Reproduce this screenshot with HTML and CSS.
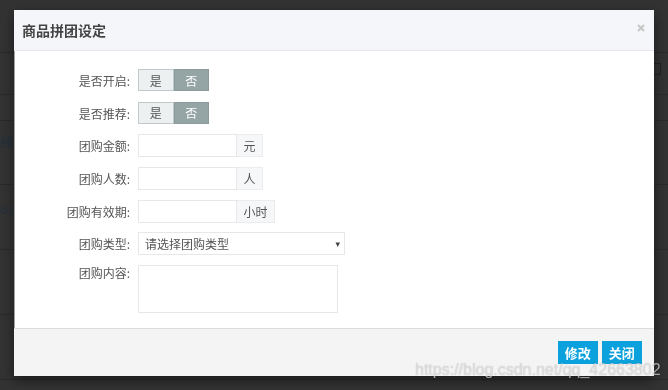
FILE: index.html
```html
<!DOCTYPE html>
<html lang="zh-CN">
<head>
    <meta charset="UTF-8">
    <meta name="viewport" content="width=device-width, initial-scale=1.0">
    <title>商品拼团设定</title>
    <link rel="stylesheet" href="styles.css">
</head>
<body>
    <!-- page behind the backdrop -->
    <div class="page">
        <div class="page-row top"></div>
        <div class="page-row h42"><span class="page-icon"></span></div>
        <div class="page-row h26"></div>
        <div class="page-row h64"><span class="page-text">纯</span></div>
        <div class="page-row h65"><span class="page-text low">os]</span></div>
        <div class="page-row h65"></div>
        <div class="page-row h65"></div>
        <div class="page-row last"></div>
    </div>

    <div class="modal">
        <div class="modal-header">
            <h4>商品拼团设定</h4>
            <span class="close">
                <svg width="8" height="8" viewBox="0 0 8 8"><path d="M1 1L7 7M7 1L1 7" stroke="#c6c6c6" stroke-width="2"/></svg>
            </span>
        </div>
        <div class="modal-body">
            <div class="form-row">
                <label>是否开启:</label>
                <div class="toggle"><span class="opt">是</span><span class="opt active">否</span></div>
            </div>
            <div class="form-row">
                <label>是否推荐:</label>
                <div class="toggle"><span class="opt">是</span><span class="opt active">否</span></div>
            </div>
            <div class="form-row">
                <label>团购金额:</label>
                <div class="input-group"><input type="text"><span class="addon">元</span></div>
            </div>
            <div class="form-row">
                <label>团购人数:</label>
                <div class="input-group"><input type="text"><span class="addon">人</span></div>
            </div>
            <div class="form-row">
                <label>团购有效期:</label>
                <div class="input-group"><input type="text"><span class="addon wide">小时</span></div>
            </div>
            <div class="form-row">
                <label>团购类型:</label>
                <div class="select"><span>请选择团购类型</span><span class="arrow">▾</span></div>
            </div>
            <div class="form-row tall">
                <label>团购内容:</label>
                <textarea></textarea>
            </div>
        </div>
        <div class="modal-footer">
            <button class="btn">修改</button>
            <button class="btn">关闭</button>
        </div>
    </div>

    <div class="watermark">https://blog.csdn.net/qq_42663802</div>
</body>
</html>
```

FILE: styles.css
```css
body {
    margin: 0;
    padding: 0;
    background-color: #333333;
    font-family: "Noto Sans CJK SC", "Liberation Sans", sans-serif;
    overflow: hidden;
}

/* faint page under the backdrop */
.page-row {
    border-bottom: 1px solid #2b2b2b;
    box-sizing: border-box;
    position: relative;
}
.page-row.top { height: 53px; }
.page-row.h42 { height: 42px; }
.page-row.h26 { height: 26px; }
.page-row.h64 { height: 64px; }
.page-row.h65 { height: 65px; }
.page-row.last { height: 10px; border-bottom: none; }
.page-text {
    display: block;
    padding-top: 10px;
    font-size: 13px;
    color: #24313d;
}
.page-text.low {
    padding-top: 14px;
}
.page-icon {
    position: absolute;
    right: 7px;
    top: 10px;
    width: 6px;
    height: 10px;
    border: 1px solid #222;
}

/* modal */
.modal {
    position: fixed;
    top: 10px;
    left: 14px;
    width: 640px;
    background: #fff;
    box-shadow: 0 4px 12px rgba(0, 0, 0, 0.5);
}
.modal-header {
    height: 40px;
    background: #f5f6fa;
    border-bottom: 1px solid #e7e7eb;
    display: flex;
    align-items: center;
    justify-content: space-between;
    padding: 0 9px 0 8px;
}
.modal-header h4 {
    margin: 0;
    font-size: 14px;
    font-weight: bold;
    color: #444;
}
.close {
    display: flex;
    margin-top: -4px;
}
.modal-body {
    border-left: 1px solid #a3a3a3;
    padding: 18px 0 15px 0;
    display: flex;
    flex-direction: column;
    gap: 9.7px;
}
.form-row {
    display: flex;
    align-items: center;
    height: 23px;
}
.form-row.tall {
    height: 48px;
    align-items: flex-start;
}
.form-row label {
    width: 115px;
    margin-right: 8px;
    text-align: right;
    font-size: 12px;
    color: #555;
    line-height: 23px;
}
.form-row.tall label {
    line-height: 16px;
}
.toggle {
    display: flex;
    height: 22px;
    align-self: flex-start;
}
.toggle .opt {
    width: 35.5px;
    box-sizing: border-box;
    display: flex;
    align-items: center;
    justify-content: center;
    font-size: 12px;
    color: #555;
    background: #ecf0f1;
    border: 1px solid #c2c9ca;
}
.toggle .opt.active {
    background: #95a5a6;
    border-color: #8b9b9c;
    color: #fff;
}
.input-group {
    display: flex;
    height: 23px;
}
.input-group input {
    width: 99px;
    height: 23px;
    box-sizing: border-box;
    border: 1px solid #e7e7e9;
    outline: none;
    padding: 0 6px;
    margin: 0;
}
.addon {
    width: 26px;
    box-sizing: border-box;
    display: flex;
    align-items: center;
    justify-content: center;
    background: #f6f7f9;
    border: 1px solid #ececef;
    border-left: none;
    font-size: 12px;
    color: #555;
}
.addon.wide {
    width: 38px;
}
.select {
    width: 207px;
    height: 23px;
    box-sizing: border-box;
    border: 1px solid #e7e7e9;
    display: flex;
    align-items: center;
    justify-content: space-between;
    padding: 0 4px 0 6px;
    font-size: 12px;
    color: #555;
}
.select .arrow {
    font-size: 9px;
    color: #444;
    font-family: "DejaVu Sans", sans-serif;
}
textarea {
    width: 200px;
    height: 48px;
    box-sizing: border-box;
    border: 1px solid #e7e7e9;
    outline: none;
    resize: none;
    margin: 0;
}
.modal-footer {
    height: 48px;
    border-top: 1px solid #dcdcdc;
    background: #f4f4f4;
    display: flex;
    justify-content: flex-end;
    align-items: flex-start;
    gap: 4.5px;
    padding: 12px 12.5px 0 0;
    box-sizing: border-box;
}
.btn {
    height: 23px;
    width: 39.5px;
    padding: 0;
    border: none;
    background: #0ba1dd;
    color: #fff;
    font-family: "Noto Sans CJK SC", sans-serif;
    font-size: 13px;
    font-weight: bold;
    cursor: pointer;
}

.watermark {
    position: fixed;
    left: 415px;
    top: 361px;
    font-family: "Liberation Sans", Arial, sans-serif;
    font-size: 16px;
    color: rgba(255, 255, 255, 0.6);
    text-shadow: 0 0 1px rgba(0, 0, 0, 0.35);
    white-space: nowrap;
}
```
